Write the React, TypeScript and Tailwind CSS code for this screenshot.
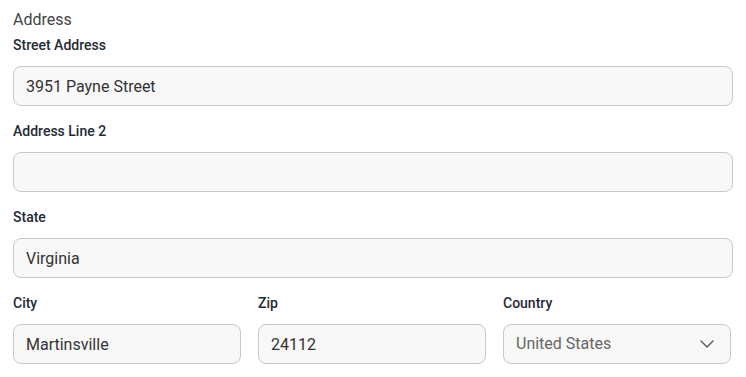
function Field({ label, value, className = "" }: { label: string; value: string; className?: string }) {
  return (
    <div className={`flex flex-col ${className}`}>
      <label className="text-[14px] leading-5 font-medium text-[#252a35]">{label}</label>
      <input
        readOnly
        value={value}
        className="mt-[11px] h-10 w-full rounded-lg border border-[#c8c8c8] bg-[#f8f8f8] px-3 text-[16px] text-[#333] outline-none"
      />
    </div>
  )
}

export default function App() {
  return (
    <div className="min-h-screen bg-white px-[13px] pt-2 font-['Roboto',sans-serif]" style={{ width: 746 }}>
      <h2 className="text-base leading-6 text-[#444]">Address</h2>
      <div className="mt-[3px] flex w-[720px] flex-col gap-[15px]">
        <Field label="Street Address" value="3951 Payne Street" />
        <Field label="Address Line 2" value="" />
        <Field label="State" value="Virginia" />
        <div className="grid w-[718px] grid-cols-3 gap-[17px]">
          <Field label="City" value="Martinsville" />
          <Field label="Zip" value="24112" />
          <div className="flex flex-col">
            <label className="text-[14px] leading-5 font-medium text-[#252a35]">Country</label>
            <div className="mt-[11px] flex h-10 items-center justify-between rounded-lg border border-[#c8c8c8] bg-[#f8f8f8] pl-3 pr-4 text-[16px] text-[#666]">
              <span>United States</span>
              <svg width="14" height="8" viewBox="0 0 14 8" fill="none" stroke="#555" strokeWidth="1.4" strokeLinecap="round" strokeLinejoin="round">
                <polyline points="1,1 7,7 13,1" />
              </svg>
            </div>
          </div>
        </div>
      </div>
    </div>
  )
}
